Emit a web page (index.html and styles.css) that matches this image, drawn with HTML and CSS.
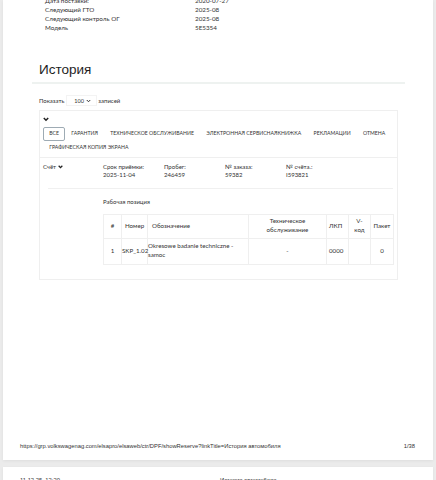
FILE: index.html
```html
<!DOCTYPE html>
<html lang="ru">
<head>
<meta charset="utf-8">
<title>История автомобиля</title>
<link rel="stylesheet" href="styles.css">
</head>
<body>
<div class="sheet">
  <div class="content">
    <dl class="info">
      <div class="info-row"><dt>Дата поставки:</dt><dd>2020-07-27</dd></div>
      <div class="info-row"><dt>Следующий ГТО</dt><dd>2025-08</dd></div>
      <div class="info-row"><dt>Следующий контроль ОГ</dt><dd>2025-08</dd></div>
      <div class="info-row"><dt>Модель</dt><dd>5E5354</dd></div>
    </dl>
    <h2 class="title">История</h2>
    <div class="rule"></div>
    <div class="section">
      <div class="length">
        <span>Показать</span>
        <span class="select">100
          <svg class="sel-chev" viewBox="0 0 10 7" aria-hidden="true"><path d="M1.5 1.5 L5 5 L8.5 1.5" fill="none" stroke="#333" stroke-width="2"/></svg>
        </span>
        <span>записей</span>
      </div>
      <div class="card filters">
        <svg class="chev" viewBox="0 0 12 9" aria-hidden="true"><path d="M1.6 1.6 L6 6 L10.4 1.6" fill="none" stroke="#222" stroke-width="3"/></svg>
        <div class="tabs">
          <button class="tab active">ВСЕ</button>
          <button class="tab">ГАРАНТИЯ</button>
          <button class="tab">ТЕХНИЧЕСКОЕ ОБСЛУЖИВАНИЕ</button>
          <button class="tab">ЭЛЕКТРОННАЯ СЕРВИСНАЯКНИЖКА</button>
          <button class="tab">РЕКЛАМАЦИИ</button>
          <button class="tab">ОТМЕНА</button>
          <button class="tab">ГРАФИЧЕСКАЯ КОПИЯ ЭКРАНА</button>
        </div>
      </div>
      <div class="card record">
        <div class="record-head">
          <div class="rh-cell">Счёт <svg class="chev-sm" viewBox="0 0 12 9" aria-hidden="true"><path d="M1.6 1.6 L6 6 L10.4 1.6" fill="none" stroke="#222" stroke-width="3"/></svg></div>
          <div class="rh-cell">Срок приёмки:<br>2025-11-04</div>
          <div class="rh-cell">Пробег:<br>246459</div>
          <div class="rh-cell">№ заказа:<br>59382</div>
          <div class="rh-cell">№ счёта.:<br>I593821</div>
        </div>
        <div class="detail">
          <div class="detail-title">Рабочая позиция</div>
          <table class="positions">
            <colgroup>
              <col class="c-num"><col class="c-nr"><col class="c-desc"><col class="c-tech"><col class="c-lkp"><col class="c-v"><col class="c-pak">
            </colgroup>
            <thead>
              <tr>
                <th class="center">#</th>
                <th class="center">Номер</th>
                <th class="left-pad">Обозначение</th>
                <th class="center tech">Техническое обслуживание</th>
                <th class="lkp">ЛКП</th>
                <th class="center vcode">V-код</th>
                <th class="center">Пакет</th>
              </tr>
            </thead>
            <tbody>
              <tr>
                <td class="center">1</td>
                <td class="flush">SKP_1.02</td>
                <td class="flush desc">Okresowe badanie techniczne - samoc</td>
                <td class="center">-</td>
                <td class="lkp">0000</td>
                <td></td>
                <td class="center">0</td>
              </tr>
            </tbody>
          </table>
        </div>
      </div>
    </div>
  </div>
  <footer class="sheet-foot">
    <span>https://grp.volkswagenag.com/elsapro/elsaweb/ctr/DPF/showReserve?linkTitle=История автомобиля</span>
    <span>1/38</span>
  </footer>
</div>
<div class="sheet sheet-next">
  <header class="sheet-head">
    <span>11.12.25, 12:20</span>
    <span>История автомобиля</span>
  </header>
</div>
</body>
</html>
```
FILE: styles.css
```css
html, body {
  margin: 0;
  height: 480px;
  overflow: hidden;
}
body {
  background: #ebebeb;
  font-family: Lato, "Noto Sans", sans-serif;
  color: #333;
}
.sheet {
  margin: 0 3px;
  background: #fff;
  height: 460px;
  display: flex;
  flex-direction: column;
  overflow: hidden;
  box-shadow: 0 1px 3px rgba(0, 0, 0, 0.06);
}
.content {
  margin: 0 28px 0 29px;
  flex: 1;
}
.info {
  margin: -4px 0 0 13px;
  font-size: 6.3px;
  line-height: 9px;
}
.info-row {
  display: grid;
  grid-template-columns: 150px auto;
}
.info dt, .info dd {
  margin: 0;
}
.title {
  margin: 30px 0 0 7px;
  font: 400 13.5px/16px "Liberation Sans", Arial, sans-serif;
  color: #1e1e1e;
}
.rule {
  height: 2px;
  margin-top: 4px;
  background: #eef2f0;
}
.section {
  padding: 0 7px;
}
.length {
  display: flex;
  align-items: center;
  height: 11px;
  margin-top: 11px;
  font-size: 6px;
}
.select {
  display: flex;
  align-items: center;
  justify-content: space-between;
  box-sizing: border-box;
  width: 31px;
  height: 11px;
  margin: 0 1px 0 2px;
  padding: 0 5px 0 7px;
  border: 1px solid #f3f3f3;
  font-size: 5.5px;
}
.sel-chev {
  width: 5px;
  height: 4px;
}
.card {
  border: 1px solid #efefef;
  margin-top: 4px;
}
.filters {
  padding: 5.5px 3px 2.7px;
}
.chev {
  display: block;
  width: 6px;
  height: 5px;
}
.tabs {
  display: flex;
  flex-wrap: wrap;
  margin-top: 5.5px;
}
.tab {
  box-sizing: border-box;
  height: 13.5px;
  padding: 0 5.2px;
  border: 1px solid transparent;
  border-radius: 2px;
  background: none;
  font: 400 5.18px/11.5px Lato, "Noto Sans", sans-serif;
  color: #333;
  cursor: pointer;
}
.tab.active {
  border-color: #9eabb4;
}
.record {
  margin-top: 0;
  border-top: 0;
  padding: 5px 0 14px 3px;
}
.record-head {
  display: grid;
  grid-template-columns: 60px repeat(4, 61px);
  font-size: 6px;
  line-height: 8.5px;
}
.chev-sm {
  width: 5px;
  height: 4px;
  vertical-align: 0;
}
.detail {
  margin: 8px 4px 0 5px;
  padding: 8px 0 0 55px;
  border-top: 1px solid #f0f0f0;
}
.detail-title {
  font-size: 6px;
  line-height: 9px;
}
.positions {
  width: 100%;
  margin-top: 8px;
  border-collapse: collapse;
  table-layout: fixed;
  font-size: 6.2px;
  line-height: 8.7px;
}
.c-num { width: 18px; }
.c-nr { width: 26px; }
.c-desc { width: 101px; }
.c-tech { width: 78px; }
.c-lkp { width: 22px; }
.c-v { width: 22px; }
.c-pak { width: 23px; }
.positions th, .positions td {
  border: 1px solid #efefef;
  padding: 0 2px;
  font-weight: 400;
  text-align: left;
  vertical-align: middle;
  white-space: normal;
}
.positions thead tr { height: 24px; }
.positions tbody tr { height: 26px; }
.positions .center { text-align: center; }
.positions .left-pad { padding-left: 4px; }
.positions .tech { padding: 0 8px; }
.positions .vcode { padding: 0 4px; }
.positions .flush { padding: 0; white-space: nowrap; }
.positions .desc { white-space: normal; padding-right: 6px; }
.positions .lkp { padding-left: 2px; }
.sheet-foot {
  display: flex;
  justify-content: space-between;
  padding: 0 18px 10.5px 17px;
  font: 5.8px/7px "Liberation Sans", Arial, sans-serif;
  color: #333;
}
.sheet-next {
  margin-top: 7px;
  height: 20px;
}
.sheet-head {
  display: grid;
  grid-template-columns: 200px auto;
  padding: 10px 17px 0;
  font: 5.8px/7px "Liberation Sans", Arial, sans-serif;
  color: #333;
}
```
